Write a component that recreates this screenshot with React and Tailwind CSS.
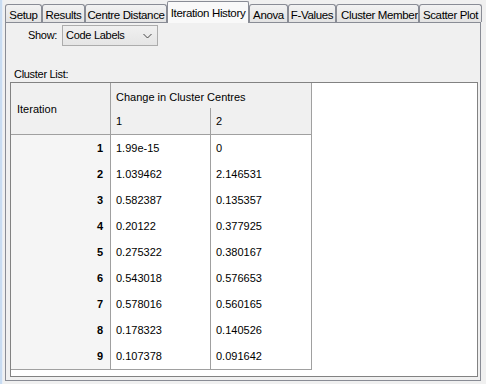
import React from "react";

const tabs = [
  { label: "Setup", w: 37 },
  { label: "Results", w: 43 },
  { label: "Centre Distance", w: 82 },
  { label: "Iteration History", w: 82, active: true },
  { label: "Anova", w: 39 },
  { label: "F-Values", w: 48 },
  { label: "Cluster Members", w: 83, clip: true },
  { label: "Scatter Plot", w: 63 },
];

const rows = [
  ["1", "1.99e-15", "0"],
  ["2", "1.039462", "2.146531"],
  ["3", "0.582387", "0.135357"],
  ["4", "0.20122", "0.377925"],
  ["5", "0.275322", "0.380167"],
  ["6", "0.543018", "0.576653"],
  ["7", "0.578016", "0.560165"],
  ["8", "0.178323", "0.140526"],
  ["9", "0.107378", "0.091642"],
];

const ui = { fontFamily: '"Liberation Sans", Arial, sans-serif', fontSize: "11px", letterSpacing: "-0.3px" };
const tabFont = { fontFamily: '"Liberation Sans", Arial, sans-serif', fontSize: "11.5px", letterSpacing: "-0.35px" };

export default function App() {
  return (
    <div className="w-[486px] h-[384px] bg-[#f0f0f0] flex overflow-hidden text-black" style={{ fontFamily: '"Liberation Sans", Arial, sans-serif' }}>
      <div className="w-[3px] h-full bg-[#c9dcf1] border-r border-[#e6eef8]" />
      <div className="flex flex-col pl-[2px] pt-[2px]">
        {/* tab strip */}
        <div className="flex items-end h-[20px] relative z-10">
          {tabs.map((t) =>
            t.active ? (
              <div
                key={t.label}
                className="h-[22px] mb-[-1px] bg-[#f9f9f9] border border-b-0 border-[#898c95] rounded-t-[2px] flex items-start justify-center pt-[3px] whitespace-nowrap overflow-hidden"
                style={{ ...tabFont, width: t.w + "px" }}
              >
                {t.label}
              </div>
            ) : (
              <div
                key={t.label}
                className={
                  "h-[18px] bg-gradient-to-b from-[#f2f2f2] to-[#e3e3e3] border border-b-0 border-[#898c95] rounded-t-[3px] flex items-start pt-[2px] whitespace-nowrap overflow-hidden " +
                  (t.clip ? "justify-start pl-[4px]" : "justify-center")
                }
                style={{ ...tabFont, width: t.w + "px" }}
              >
                {t.label}
              </div>
            )
          )}
        </div>
        {/* panel */}
        <div className="w-[476px] h-[359px] border border-[#898c95] bg-[#f0f0f0] flex flex-col">
          <div className="flex items-center h-[21px] mt-[2px] pl-[22px]">
            <span className="mr-[5px]" style={ui}>Show:</span>
            <div className="w-[96px] h-[21px] border border-[#acacac] bg-gradient-to-b from-[#f0f0f0] to-[#e5e5e5] flex items-center pl-[3px] pr-[4px] justify-between">
              <span style={ui}>Code Labels</span>
              <svg width="9" height="6" viewBox="0 0 9 6" className="mr-[1px]">
                <path d="M0.5 1 L4.5 5 L8.5 1" fill="none" stroke="#444" strokeWidth="1" />
              </svg>
            </div>
          </div>
          <div className="pl-[8px] mt-[22px] h-[13px] leading-[13px]" style={ui}>Cluster List:</div>
          <div className="ml-[4px] mt-[1px] w-[468px] h-[295px] border border-[#828282] bg-white" style={{ fontFamily: '"Liberation Sans", Arial, sans-serif', fontSize: "11px" }}>
            <div className="w-[301px] border-r border-b border-[#a0a0a0]">
              {/* header */}
              <div className="flex h-[52px] bg-[#f0f0f0] border-b border-[#a0a0a0]">
                <div className="w-[100px] border-r border-[#a0a0a0] flex items-center pl-[6px] pt-[1px]">Iteration</div>
                <div className="flex-1 flex flex-col">
                  <div className="h-[25px] flex items-center pl-[5px] pt-[3px]">Change in Cluster Centres</div>
                  <div className="flex-1 flex">
                    <div className="w-[100px] border-r border-[#a0a0a0] flex items-center pl-[5px]">1</div>
                    <div className="flex-1 flex items-center pl-[5px]">2</div>
                  </div>
                </div>
              </div>
              {rows.map((r) => (
                <div key={r[0]} className="flex h-[26px]">
                  <div className="w-[100px] bg-[#f5f5f5] border-r border-[#a0a0a0] flex items-center justify-end pr-[7px] font-bold">{r[0]}</div>
                  <div className="w-[100px] border-r border-[#a0a0a0] flex items-center pl-[5px]">{r[1]}</div>
                  <div className="flex-1 flex items-center pl-[5px]">{r[2]}</div>
                </div>
              ))}
            </div>
          </div>
        </div>
      </div>
    </div>
  );
}
